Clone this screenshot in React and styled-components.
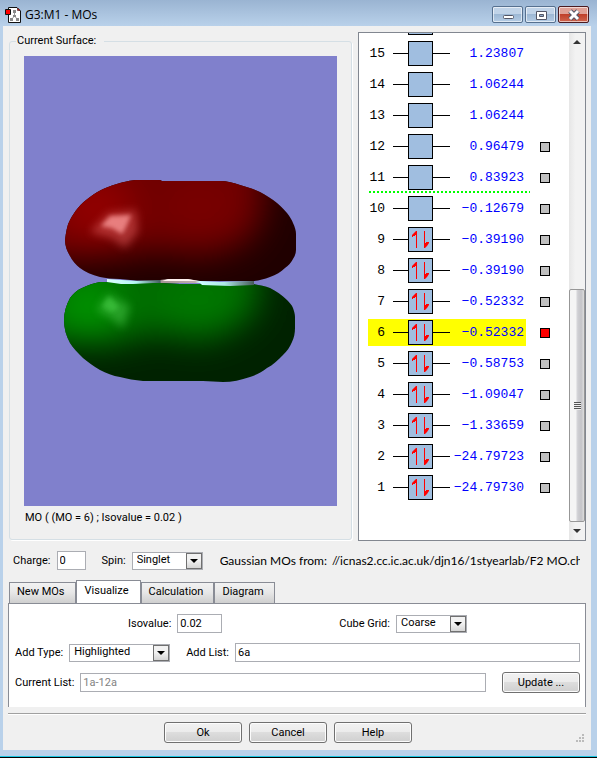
import React, { useState } from "react";
import styled, { createGlobalStyle, css } from "styled-components";

const levels = [
  { id: 15, energy: "1.23807" },
  { id: 14, energy: "1.06244" },
  { id: 13, energy: "1.06244" },
  { id: 12, energy: "0.96479", pick: true },
  { id: 11, energy: "0.83923", pick: true, lumo: true },
  { id: 10, energy: "−0.12679", pick: true },
  { id: 9, energy: "−0.39190", pick: true, filled: true },
  { id: 8, energy: "−0.39190", pick: true, filled: true },
  { id: 7, energy: "−0.52332", pick: true, filled: true },
  { id: 6, energy: "−0.52332", pick: true, filled: true },
  { id: 5, energy: "−0.58753", pick: true, filled: true },
  { id: 4, energy: "−1.09047", pick: true, filled: true },
  { id: 3, energy: "−1.33659", pick: true, filled: true },
  { id: 2, energy: "−24.79723", pick: true, filled: true },
  { id: 1, energy: "−24.79730", pick: true, filled: true },
];

const tabs = ["New MOs", "Visualize", "Calculation", "Diagram"];

const AppIcon = () => (
  <svg width="16" height="16" viewBox="0 0 16 16" aria-hidden="true">
    <path d="M3.5 0.5H12L15.5 4V15.5H3.5Z" fill="#fff" stroke="#111" />
    <path d="M12.5 1L15 3.5H12.5Z" fill="#f00" stroke="#111" strokeWidth="0.5" />
    <path d="M9.5 4V9M9.5 9L6 13M9.5 9L13 13" stroke="#999" fill="none" />
    <path d="M8 3h3v3H8zM8 8h3v2H8zM5 11h3v3H5zM11 11h3v3h-3z" fill="#888" />
    <path d="M0.5 2.5H5.5V7.5H0.5Z" fill="#f00" stroke="#111" />
  </svg>
);

const Electrons = () => (
  <svg width="23" height="23" viewBox="0 0 23 23" aria-hidden="true">
    <path d="M7.5 3V20M15.5 3V20" stroke="#f00" fill="none" />
    <path d="M8 3V7H6V8H4V9H3V7L5 5L7 3ZM15 20V15H17V14H20V15L18 18L16 20Z" fill="#f00" />
  </svg>
);

const Surface = () => (
  <svg viewBox="0 0 313 450" role="img" aria-label="Molecular orbital surface">
    <defs>
      <filter id="soft" x="-50%" y="-50%" width="200%" height="200%">
        <feGaussianBlur stdDeviation="16" />
      </filter>
      <filter id="shine" x="-50%" y="-50%" width="200%" height="200%">
        <feGaussianBlur stdDeviation="4" />
      </filter>
      <filter id="spark" x="-50%" y="-50%" width="200%" height="200%">
        <feGaussianBlur stdDeviation="2" />
      </filter>
      <linearGradient id="ring">
        <stop offset="0" stopColor="#dff" />
        <stop offset="0.2" stopColor="#b4f4f4" />
        <stop offset="0.36" stopColor="#456060" />
        <stop offset="0.37" stopColor="#a59595" />
        <stop offset="0.6" stopColor="#c0aeae" />
        <stop offset="0.63" stopColor="#cff" />
        <stop offset="0.8" stopColor="#aee8e8" />
        <stop offset="1" stopColor="#455858" />
      </linearGradient>
      <clipPath id="upper">
        <path d="M41 184C42 176 43 169 46 164C50 156 57 147 66 141C75 134 85 130 96 127C104 125 108 124 113 124H136L138 125H196C203 125 210 127 216 129C223 131 230 133 236 136C242 139 248 143 253 147C257 150 260 154 263 157C266 161 268 164 269 167C271 171 272 175 272 178V194C272 197 271 200 269 203C267 207 264 210 261 212C257 216 252 219 246 221C240 223 235 225 229 225H129C117 225 106 224 96 223C88 223 82 222 76 221C68 219 61 216 56 212C52 209 48 204 46 200C43 195 41 190 41 184Z" />
      </clipPath>
      <clipPath id="lower">
        <path d="M40 264C40 257 42 249 46 242C49 238 53 234 58 232C64 229 70 227 76 226H96C110 226 122 227 136 227C150 228 162 228 176 228H229C235 229 241 230 246 232C252 235 258 239 263 244C265 246 268 249 269 252C270 255 271 258 271 261V272C271 277 270 282 268 286C266 291 263 295 259 299C254 304 249 309 243 312C238 316 232 319 226 321C217 324 208 326 199 326L179 325H119C111 324 103 323 96 321C89 320 82 317 76 314C69 310 64 306 59 302C54 297 49 292 46 287C42 280 40 272 40 264Z" />
      </clipPath>
    </defs>
    <rect width="313" height="450" fill="#8080cc" />
    <g clipPath="url(#upper)">
      <path d="M30 110H280V235H30Z" fill="#200000" />
      <g filter="url(#soft)">
        <path d="M0 80H238L240 160L222 188L180 201L130 195L85 203L0 205Z" fill="#700000" />
        <ellipse cx="72" cy="152" rx="38" ry="32" fill="#900000" />
        <ellipse cx="175" cy="150" rx="38" ry="24" fill="#780000" />
      </g>
      <path filter="url(#shine)" d="M66 176L84 157L112 154L114 176L101 192L88 182Z" fill="#e06060" opacity="0.5" />
      <path filter="url(#spark)" d="M77 170L86 160L107 159L102 171L98 178L88 172Z" fill="#ffa0a0" opacity="0.7" />
    </g>
    <g clipPath="url(#lower)">
      <path d="M30 215H280V335H30Z" fill="#002200" />
      <g filter="url(#soft)">
        <path d="M0 170H232L236 250L215 272L180 286L130 278L85 290L0 285Z" fill="#006c00" />
        <ellipse cx="65" cy="250" rx="32" ry="28" fill="#009000" />
        <ellipse cx="175" cy="246" rx="40" ry="22" fill="#007800" />
      </g>
      <path filter="url(#shine)" d="M73 254L84 238L106 250L99 272L88 262Z" fill="#50c850" opacity="0.5" />
      <path filter="url(#spark)" d="M78 250L85 240L95 251L88 256Z" fill="#50d850" opacity="0.4" />
    </g>
    <path
      d="M83 223L113 225L136 224L144 223H164L176 225L196 226L230 225V229L206 230L178 229L176 227H139L129 227L109 228L97 228L83 226Z"
      fill="url(#ring)"
    />
    <path d="M144 223H164L174 225H138Z" fill="#fff0ee" />
  </svg>
);

const Select = ({ id, value, width }) => (
  <SelectBox $width={width}>
    <select id={id} defaultValue={value}>
      <option>{value}</option>
    </select>
    <span className="arrow" />
  </SelectBox>
);

const App = () => {
  const [active, setActive] = useState("Visualize");
  const [current, setCurrent] = useState(6);

  return (
    <Window>
      <GlobalStyle />
      <TitleBar>
        <AppIcon />
        <h1>G3:M1 - MOs</h1>
        <Caption aria-label="Minimize">
          <svg width="12" height="12" viewBox="0 0 12 12">
            <rect x="1.5" y="6.5" width="10" height="3" rx="1" fill="#fff" stroke="#535666" />
          </svg>
        </Caption>
        <Caption aria-label="Maximize">
          <svg width="12" height="12" viewBox="0 0 12 12">
            <path d="M1.5 2.5H11.5V10.5H1.5Z" fill="#fff" stroke="#535666" />
            <path d="M4.5 5.5H8.5V7.5H4.5Z" fill="#8fa9c6" stroke="#535666" />
          </svg>
        </Caption>
        <Caption $close aria-label="Close">
          <svg width="12" height="12" viewBox="0 0 12 12">
            <path d="M2 2L10 10M10 2L2 10" stroke="#535666" strokeWidth="5" />
            <path d="M2 2L10 10M10 2L2 10" stroke="#fff" strokeWidth="3" />
          </svg>
        </Caption>
      </TitleBar>

      <Client>
        <Main>
          <GroupBox>
            <legend>Current Surface:</legend>
            <Viewport>
              <Surface />
            </Viewport>
            <p>MO ( (MO = 6) ; Isovalue = 0.02 )</p>
          </GroupBox>

          <Diagram>
            <Levels>
              <Row>
                <Level>
                  <span className="id" />
                  <Wire $short />
                  <Orbital />
                  <Wire />
                </Level>
              </Row>
              {levels.map((level) => (
                <Row key={level.id} $lumo={level.lumo}>
                  <Level $on={level.id === current}>
                    <span className="id">{level.id}</span>
                    <Wire $short />
                    <Orbital>{level.filled && <Electrons />}</Orbital>
                    <Wire />
                    <span className="energy">{level.energy}</span>
                  </Level>
                  {level.pick && (
                    <Pick
                      type="checkbox"
                      aria-label={`Orbital ${level.id}`}
                      checked={level.id === current}
                      onChange={() => setCurrent(level.id)}
                    />
                  )}
                </Row>
              ))}
            </Levels>
            <ScrollBar>
              <ScrollArrow $up aria-label="Scroll up" />
              <Thumb />
              <ScrollArrow aria-label="Scroll down" />
            </ScrollBar>
          </Diagram>
        </Main>

        <Settings>
          <label htmlFor="charge">Charge:</label>
          <Input id="charge" $width="29px" defaultValue="0" />
          <label className="spin" htmlFor="spin">Spin:</label>
          <Select id="spin" value="Singlet" width="71px" />
          <Source>
            <span>Gaussian MOs from:</span>
            <span>//icnas2.cc.ic.ac.uk/djn16/1styearlab/F2 MO.ch</span>
          </Source>
        </Settings>

        <Tabs role="tablist">
          {tabs.map((tab) => (
            <Tab
              key={tab}
              role="tab"
              aria-selected={tab === active}
              $active={tab === active}
              onClick={() => setActive(tab)}
            >
              {tab}
            </Tab>
          ))}
        </Tabs>

        <Panel role="tabpanel">
          <TopLine>
            <Field>
              <label htmlFor="iso">Isovalue:</label>
              <Input id="iso" $width="45px" defaultValue="0.02" />
            </Field>
            <Field>
              <label htmlFor="grid">Cube Grid:</label>
              <Select id="grid" value="Coarse" width="71px" />
            </Field>
          </TopLine>
          <Line>
            <Field>
              <label htmlFor="type">Add Type:</label>
              <Select id="type" value="Highlighted" width="101px" />
            </Field>
            <Field $grow>
              <label htmlFor="list">Add List:</label>
              <Input id="list" defaultValue="6a" />
            </Field>
          </Line>
          <Line>
            <Field $grow>
              <label htmlFor="current">Current List:</label>
              <Input id="current" defaultValue="1a-12a" disabled />
            </Field>
            <Button>Update ...</Button>
          </Line>
        </Panel>

        <Footer>
          <Button>Ok</Button>
          <Button>Cancel</Button>
          <Button>Help</Button>
          <Grip width="10" height="10" viewBox="0 0 10 10" aria-hidden="true">
            <path
              d="M7 1h2v2H7zM4 4h2v2H4zM7 4h2v2H7zM1 7h2v2H1zM4 7h2v2H4zM7 7h2v2H7z"
              fill="#bbb"
            />
          </Grip>
        </Footer>
      </Client>
    </Window>
  );
};

export default App;

const GlobalStyle = createGlobalStyle`
  * {
    box-sizing: border-box;
  }
  body {
    margin: 0;
    font: 11px/14px Roboto, "Liberation Sans", sans-serif;
    color: #000;
  }
  button, input, select {
    margin: 0;
    font: inherit;
    color: inherit;
  }
  h1, p {
    margin: 0;
    font: inherit;
  }
`;

const Window = styled.div`
  height: 100vh;
  min-height: 600px;
  display: flex;
  flex-direction: column;
  padding: 0 6px 7px 3px;
  border-bottom: 1px solid #000;
  box-shadow: inset 0 -1px #19c5e0;
  background: linear-gradient(#9ab4d2, #b9d1ea 26px, #b9d1ea);
`;

const TitleBar = styled.header`
  flex: none;
  height: 26px;
  padding: 3px 2px 0;
  display: flex;
  align-items: center;

  h1 {
    flex: 1;
    margin-left: 4px;
    font: 12px/16px "Open Sans", sans-serif;
  }
`;

const Caption = styled.button`
  width: 31px;
  height: 17px;
  margin-left: 2px;
  padding: 0;
  display: grid;
  place-items: center;
  border: 1px solid #56708f;
  border-radius: 2px;
  box-shadow: inset 0 0 0 1px #ffffff99;
  background: linear-gradient(#c0d3e8 50%, #9db8d5 50%, #b4cce5);
  ${({ $close }) =>
    $close &&
    css`
      border-color: #4a1a20;
      background: linear-gradient(#e0a197 45%, #c0402b 50%, #d0654e);
    `}
`;

const Client = styled.main`
  flex: 1;
  min-height: 0;
  display: flex;
  flex-direction: column;
  padding: 6px 5px 7px;
  background: #f0f0f0;
`;

const Main = styled.div`
  flex: 1;
  min-height: 0;
  display: grid;
  grid-template-columns: minmax(0, 1fr) 228px;
  grid-template-rows: minmax(0, 1fr);
  gap: 6px;
`;

const GroupBox = styled.fieldset`
  min-width: 0;
  min-height: 0;
  margin: 2px 0 1px 1px;
  padding: 8px 14px 14px;
  border: 1px solid #d5dfe5;
  border-radius: 3px;
  box-shadow: 1px 1px #fff;
  display: flex;
  flex-direction: column;

  legend {
    margin-left: -8px;
    padding: 0 8px 0 1px;
  }
  p {
    margin: 5px 0 0 1px;
  }
`;

const Viewport = styled.div`
  flex: 1;
  min-height: 0;
  background: #8080cc;

  svg {
    display: block;
    width: 100%;
    height: 100%;
  }
`;

const Diagram = styled.section`
  min-height: 0;
  display: flex;
  border: 1px solid #828790;
  background: #fff;
`;

const Levels = styled.div`
  flex: 1;
  min-height: 0;
  overflow: hidden;
  display: flex;
  flex-direction: column;
  justify-content: flex-end;
  padding: 0 0 37px 9px;
`;

const Row = styled.div`
  flex: none;
  height: 31px;
  display: flex;
  align-items: center;
  gap: 14px;
  ${({ $lumo }) =>
    $lumo &&
    css`
      background: repeating-linear-gradient(90deg, #0f0 0 2px, transparent 2px 4px)
        1px 100% / 161px 2px no-repeat;
    `}
`;

const Level = styled.div`
  width: 158px;
  height: 27px;
  display: flex;
  align-items: center;
  font: 13px/27px "Liberation Mono", monospace;
  background: ${({ $on }) => ($on ? "#ff0" : "transparent")};

  .id {
    width: 17px;
    margin-right: 8px;
    text-align: right;
  }
  .energy {
    flex: 1;
    display: flex;
    justify-content: flex-end;
    margin-right: 2px;
    color: #00f;
  }
`;

const Wire = styled.span`
  flex: none;
  width: ${({ $short }) => ($short ? "15px" : "17px")};
  height: 1px;
  background: #000;
`;

const Orbital = styled.span`
  flex: none;
  width: 25px;
  height: 25px;
  border: 1px solid #000;
  background: #a0bee0;

  svg {
    display: block;
  }
`;

const Pick = styled.input`
  appearance: none;
  width: 10px;
  height: 10px;
  margin: 0;
  border: 1px solid #000;
  background: #c0c0c0;

  &:checked {
    background: #f00;
  }
`;

const ScrollBar = styled.div`
  width: 16px;
  display: flex;
  flex-direction: column;
  background: linear-gradient(90deg, #e6e6e6, #f2f2f2 40%);
`;

const ScrollArrow = styled.button`
  flex: ${({ $up }) => ($up ? "1" : "none")};
  height: 18px;
  padding: 7px 0 0;
  display: flex;
  align-items: flex-start;
  justify-content: center;
  border: 0;
  background: none;

  &::before {
    content: "";
    border: 4px solid transparent;
    ${({ $up }) =>
      $up
        ? "border-bottom-color: #333; border-top: 0;"
        : "border-top-color: #333; border-bottom: 0;"}
  }
`;

const Thumb = styled.div`
  height: 233px;
  display: grid;
  place-items: center;
  border: 1px solid #979797;
  border-radius: 2px;
  background: linear-gradient(90deg, #f5f5f5 40%, #d0d0d4 55%, #c4c4c8 80%, #dcdcdc);

  &::before {
    content: "";
    width: 7px;
    height: 8px;
    background: repeating-linear-gradient(#555 0 1px, #eee 1px 2px);
  }
`;

const Settings = styled.div`
  flex: none;
  display: flex;
  align-items: center;
  gap: 6px;
  padding: 10px 6px 10px 5px;

  .spin {
    margin-left: 10px;
  }
`;

const Source = styled.div`
  flex: 1;
  min-width: 0;
  overflow: hidden;
  display: flex;
  gap: 5px;
  margin-left: 11px;
  white-space: nowrap;
  font: 12px/16px Lato, sans-serif;
`;

const control = css`
  border: 1px solid #abadb3;
  background: #fff;
`;

const Input = styled.input`
  ${control}
  width: ${({ $width }) => $width || "auto"};
  flex: ${({ $width }) => ($width ? "none" : "1")};
  min-width: 0;
  height: 19px;
  padding: 0 2px;

  &:disabled {
    color: #838383;
  }
`;

const SelectBox = styled.span`
  ${control}
  width: ${({ $width }) => $width};
  height: 18px;
  display: grid;
  grid-template-columns: 1fr 16px;

  select {
    grid-area: 1 / 1 / 2 / 3;
    appearance: none;
    min-width: 0;
    padding: 0 16px 1px 4px;
    border: 0;
    background: none;
  }
  .arrow {
    grid-area: 1 / 2;
    display: grid;
    place-items: center;
    border: 1px solid #707070;
    background: linear-gradient(#f2f2f2 45%, #d5d5d5);
    pointer-events: none;
  }
  .arrow::before {
    content: "";
    border: 4px solid transparent;
    border-top-color: #000;
    border-bottom: 0;
  }
`;

const Tabs = styled.div`
  flex: none;
  height: 24px;
  display: flex;
  align-items: flex-end;
  padding-left: 1px;
  margin-bottom: -1px;
`;

const Tab = styled.button`
  height: 22px;
  padding: 0 10px 2px 7px;
  border: 1px solid #898c95;
  background: linear-gradient(#f2f2f2, #e8e8e8 45%, #cfcfcf);
  ${({ $active }) =>
    $active &&
    css`
      height: 24px;
      padding: 0 11px 4px 8px;
      border-bottom: 0;
      background: #fff;
    `}
`;

const Panel = styled.section`
  flex: none;
  display: flex;
  flex-direction: column;
  gap: 10px;
  padding: 10px 5px 14px 6px;
  border: 1px solid #898c95;
  border-bottom: 0;
  background: #fff;
`;

const Line = styled.div`
  display: flex;
  align-items: center;
  gap: 16px;
`;

const TopLine = styled(Line)`
  justify-content: space-between;
  padding: 0 113px;
`;

const Field = styled.div`
  flex: ${({ $grow }) => ($grow ? "1" : "none")};
  min-width: 0;
  display: flex;
  align-items: center;
  gap: 6px;
`;

const Button = styled.button`
  width: 78px;
  height: 21px;
  padding: 0;
  border: 1px solid #707070;
  border-radius: 3px;
  box-shadow: inset 0 0 0 1px #fcfcfc;
  background: linear-gradient(#f2f2f2, #ebebeb 48%, #dddddd 50%, #cfcfcf);
`;

const Footer = styled.footer`
  flex: none;
  display: flex;
  justify-content: center;
  gap: 7px;
  margin-top: 6px;
  padding: 8px 18px 0 0;
  border-top: 1px solid #a0a0a0;
  box-shadow: inset 0 1px #fff;
  position: relative;
`;

const Grip = styled.svg`
  position: absolute;
  right: 1px;
  bottom: 0;
`;
